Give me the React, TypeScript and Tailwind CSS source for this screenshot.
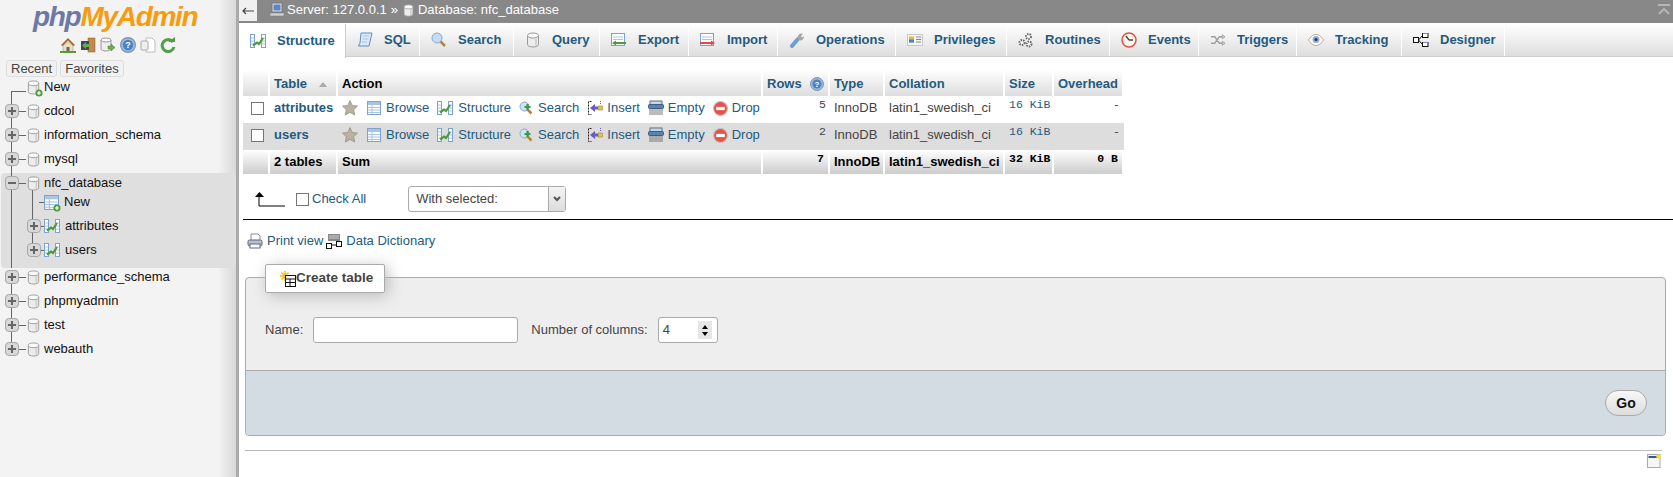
import type { ReactNode } from 'react'

const FONT = "font-['Liberation_Sans',Arial,sans-serif]"

function Cylinder({ size = 16 }: { size?: number }) {
  return (
    <svg width={size} height={size} viewBox="0 0 16 16" className="shrink-0">
      <path d="M2.500 3.500v9c0 1.400 2.500 2.500 5.500 2.500s5.500-1.100 5.500-2.500v-9z" fill="#ececec" stroke="#9a9a9a" />
      <ellipse cx="8" cy="3.500" rx="5.500" ry="2.500" fill="#fafafa" stroke="#9a9a9a" />
      <path d="M11 6.500v7" stroke="#d0d0d0" strokeWidth="2" />
    </svg>
  )
}

function PlusBadge() {
  return (
    <svg width="8" height="8" viewBox="0 0 8 8" className="absolute -right-0.5 -bottom-0.5">
      <circle cx="4" cy="4" r="3.500" fill="#4c9f3c" />
      <path d="M4 2v4M2 4h4" stroke="#fff" strokeWidth="1.200" />
    </svg>
  )
}

function TableIcon({ size = 14 }: { size?: number }) {
  return (
    <svg width={size} height={size} viewBox="0 0 14 14" className="shrink-0">
      <rect x=".5" y=".5" width="13" height="13" fill="#fff" stroke="#7ba3d0" />
      <rect x="1" y="1" width="12" height="3" fill="#a9c4e4" />
      <path d="M1 6.500h12M1 9h12M1 11.500h12M5 4v9" stroke="#a9c4e4" />
    </svg>
  )
}

function StructureIcon() {
  return (
    <svg width="16" height="14" viewBox="0 0 16 14" className="shrink-0">
      <rect x=".5" y=".5" width="4" height="13" fill="#fff" stroke="#7ba3d0" />
      <rect x="11.500" y=".5" width="4" height="13" fill="#fff" stroke="#7ba3d0" />
      <path d="M1 4h3M1 7h3M1 10h3M12 4h3M12 7h3M12 10h3" stroke="#a9c4e4" />
      <path d="M3 11.500 7 8.500l2 1.500 4-6" fill="none" stroke="#4f9a3a" strokeWidth="2.200" />
    </svg>
  )
}

function StarIcon() {
  return (
    <svg width="16" height="16" viewBox="0 0 16 16" className="shrink-0">
      <path d="M8 .5l2.300 5 5.200.6-3.800 3.600 1 5.300L8 12.400 3.300 15l1-5.300L.5 6.100l5.200-.6z" fill="#b9b2a0" stroke="#8f8a7c" strokeWidth=".7" />
    </svg>
  )
}

function MagnifierPlus() {
  return (
    <svg width="14" height="14" viewBox="0 0 14 14" className="shrink-0">
      <path d="M8 8l4.500 4.500" stroke="#b5843c" strokeWidth="2.500" />
      <circle cx="5.500" cy="5.500" r="4.500" fill="#cfe2f6" stroke="#8aa9c9" />
      <path d="M8.500 3v6M5.500 6h6" stroke="#3f9a3a" strokeWidth="2.200" />
    </svg>
  )
}

function InsertIcon() {
  return (
    <svg width="16" height="16" viewBox="0 0 16 16" className="shrink-0">
      <path d="M4.500 1.500h-3v13h3" fill="none" stroke="#222" strokeDasharray="2 1" />
      <path d="M3 8l5-4v2.500h3v3H8V12z" fill="#6a5acd" />
      <rect x="11.500" y="6" width="4" height="4" fill="#f2c230" stroke="#8a7a20" strokeWidth=".5" />
      <path d="M13.500 1v3" stroke="#6a5acd" strokeDasharray="1 1" />
    </svg>
  )
}

function EmptyIcon() {
  return (
    <svg width="16" height="16" viewBox="0 0 16 16" className="shrink-0">
      <rect x="2" y="1" width="12" height="4" fill="#c8d7e8" stroke="#51718f" />
      <rect x="0.500" y="4.500" width="15" height="4" rx="1" fill="#5b84ad" stroke="#3d5d7c" />
      <path d="M2 9v6M4 9v6M6 9v6M8 9v6M10 9v6M12 9v6M14 9v6" stroke="#777" />
    </svg>
  )
}

function DropIcon() {
  return (
    <svg width="15" height="15" viewBox="0 0 14 14" className="shrink-0">
      <circle cx="7" cy="7" r="6.500" fill="#e5534b" stroke="#c9c0bc" />
      <rect x="3" y="5.500" width="8" height="3" fill="#fff" />
    </svg>
  )
}

function HelpIcon({ size = 14 }: { size?: number }) {
  return (
    <svg width={size} height={size} viewBox="0 0 14 14" className="shrink-0">
      <circle cx="7" cy="7" r="6.500" fill="#9bb8dd" stroke="#8096b4" />
      <circle cx="7" cy="7" r="4.500" fill="#4c82c4" />
      <text x="7" y="10" textAnchor="middle" fontSize="8" fontWeight="700" fill="#fff" fontFamily="Liberation Sans">?</text>
    </svg>
  )
}

function DesignerIcon() {
  return (
    <svg width="16" height="16" viewBox="0 0 16 16" fill="#fff" stroke="#111">
      <rect x=".5" y="5.500" width="5" height="5" />
      <rect x="9.500" y="1.500" width="5.500" height="4" />
      <rect x="9.500" y="10.500" width="5.500" height="4" />
      <path d="M5.500 8 9.500 3.500M5.500 8l4 4.500" fill="none" />
      <path d="M10 1h5v1h-5zM10 10h5v1h-5z" fill="#8a7fc0" stroke="none" />
    </svg>
  )
}

function TabIcon({ name }: { name: string }) {
  switch (name) {
    case 'Structure':
      return <StructureIcon />
    case 'SQL':
      return (
        <svg width="16" height="16" viewBox="0 0 16 16">
          <path d="M4 1h11l-3 13H1.500L3 11z" fill="#dbe9f8" stroke="#5d8fc7" />
          <path d="M6 4h6M5.500 7h6M5 10h5" stroke="#a9c4e4" />
        </svg>
      )
    case 'Search':
      return (
        <svg width="16" height="16" viewBox="0 0 16 16">
          <path d="M9 9l5 5" stroke="#b5843c" strokeWidth="2.500" />
          <circle cx="6" cy="6" r="5" fill="#c5dcf4" stroke="#8aa9c9" />
        </svg>
      )
    case 'Query':
      return <Cylinder />
    case 'Export':
      return (
        <svg width="16" height="14" viewBox="0 0 16 14">
          <rect x=".5" y=".5" width="13" height="12" fill="#fff" stroke="#7ba3d0" />
          <path d="M2 4h10M2 6.500h10" stroke="#a9c4e4" />
          <path d="M1 10l4-2.500V9h10v2H5v1.500z" fill="#4f9a3a" />
        </svg>
      )
    case 'Import':
      return (
        <svg width="16" height="14" viewBox="0 0 16 14">
          <rect x=".5" y=".5" width="13" height="12" fill="#fff" stroke="#7ba3d0" />
          <path d="M2 4h10M2 6.500h10" stroke="#a9c4e4" />
          <path d="M0 9h11V7.500l4 2.500-4 2.500V11H0z" fill="#e24a4a" />
        </svg>
      )
    case 'Operations':
      return (
        <svg width="16" height="16" viewBox="0 0 16 16">
          <path d="M3 14l6-7" stroke="#6f9bd6" strokeWidth="4" strokeLinecap="round" />
          <path d="M9 6a3.500 3.500 0 0 1 5-4l-2 2 1 1.500 2-1a3.500 3.500 0 0 1-5 3.500z" fill="#a3a7ad" />
        </svg>
      )
    case 'Privileges':
      return (
        <svg width="16" height="12" viewBox="0 0 16 12">
          <rect x=".5" y=".5" width="15" height="11" fill="#f4f4f4" stroke="#c8c8c8" />
          <rect x="2" y="2.500" width="5" height="6" fill="#e9b44c" />
          <rect x="2" y="5.500" width="5" height="3" fill="#4c82c4" />
          <path d="M9 3h5M9 5.500h5M9 8h5" stroke="#888" />
        </svg>
      )
    case 'Routines':
      return (
        <svg width="16" height="16" viewBox="0 0 16 16" fill="#f6f6f6" stroke="#666">
          <circle cx="10.500" cy="4.500" r="2.500" strokeWidth="2" strokeDasharray="1.500 1" />
          <circle cx="4" cy="10.500" r="2.500" strokeWidth="2" strokeDasharray="1.500 1" />
          <circle cx="11" cy="12" r="2.500" strokeWidth="2" strokeDasharray="1.500 1" />
        </svg>
      )
    case 'Events':
      return (
        <svg width="16" height="16" viewBox="0 0 16 16">
          <circle cx="8" cy="8" r="7" fill="#fbf6e8" stroke="#e2504c" strokeWidth="1.500" />
          <path d="M8 8 5 4M8 8h4" stroke="#444" strokeWidth="1.300" />
        </svg>
      )
    case 'Triggers':
      return (
        <svg width="15" height="12" viewBox="0 0 16 12" fill="none" stroke="#a0a0a0">
          <path d="M0 2.500h4l5 7h3M0 9.500h4l5-7h3" strokeWidth="1.500" />
          <path d="M12 .5l3 2-3 2zM12 7.500l3 2-3 2z" fill="#d8d8d8" />
        </svg>
      )
    case 'Tracking':
      return (
        <svg width="16" height="12" viewBox="0 0 16 12">
          <path d="M.5 6C3 2 5.500.5 8 .5S13 2 15.500 6C13 10 10.500 11.500 8 11.500S3 10 .5 6z" fill="#fff" stroke="#c9a27c" />
          <circle cx="8" cy="5.500" r="3.500" fill="#8eaee0" />
          <circle cx="8" cy="5.500" r="1.500" fill="#334" />
        </svg>
      )
    default:
      return <DesignerIcon />
  }
}

function Toggle({ open = false }: { open?: boolean }) {
  return (
    <span className="relative z-10 w-[14px] h-[14px] rounded-[4px] bg-[#d8d8d8] border border-[#a8a8a8] flex items-center justify-center shrink-0">
      <span className="block w-[8px] h-[2px] bg-[#666]" />
      {!open && <span className="absolute block w-[2px] h-[8px] bg-[#666]" />}
    </span>
  )
}

function DbRow({ name, last, className = 'h-[24px]' }: { name: string; last?: boolean; className?: string }) {
  return (
    <div className={`relative flex items-center pl-[5px] ${className}`}>
      {!last && <span className="absolute left-[11px] top-[12px] w-px h-[24px] bg-[#666]" />}
      <Toggle />
      <span className="w-[7px] h-px bg-[#666]" />
      <Cylinder size={15} />
      <span className="ml-[3px] text-[13px] text-[#111]">{name}</span>
    </div>
  )
}

function SubRow({ name, icon, toggle, className }: { name: string; icon: ReactNode; toggle?: boolean; className: string }) {
  return (
    <div className={`relative flex items-center pl-[27px] ${className}`}>
      {toggle ? <Toggle /> : <span className="ml-[5px] w-[7px]" />}
      <span className={toggle ? 'w-[3px] h-px bg-[#666]' : 'w-[5px] h-px bg-[#666]'} />
      {icon}
      <span className="ml-[5px] text-[13px] text-[#111]">{name}</span>
    </div>
  )
}

function Sidebar() {
  const iconBase = 'w-[16px] h-[16px] shrink-0'
  return (
    <aside className="w-[236px] shrink-0 bg-[linear-gradient(to_right,#f3f3f3_0,#f3f3f3_218px,#d9d9d9_100%)]">
      <div className="h-[33px] pl-[33px] flex items-center italic font-bold text-[28px] leading-none tracking-[-1.3px]">
        <span className="text-[#6c78a8]">php</span>
        <span className="text-[#f89c0e]">MyAdmin</span>
      </div>
      <div className="flex items-center pl-[60px] gap-[4px] h-[24px]">
        <svg viewBox="0 0 16 16" className={iconBase}>
          <path d="M1 8l7-7 7 7-1.500 1L8 3.500 2.500 9z" fill="#a8642c" />
          <path d="M3 9v6h10V9L8 4.500z" fill="#eadfc0" stroke="#888" strokeWidth=".5" />
          <rect x="6.500" y="10" width="3" height="5" fill="#666" />
          <path d="M0 15h16" stroke="#5a9a3a" strokeWidth="2" />
        </svg>
        <svg viewBox="0 0 16 16" className={iconBase}>
          <rect x="8" y="1" width="7" height="14" fill="#c08a4a" stroke="#8a5a2a" strokeWidth=".5" />
          <rect x="1" y="4" width="8" height="9" fill="#445" />
          <path d="M2 8.500 6 5v2h4v3H6v2z" fill="#5ab04a" />
        </svg>
        <svg viewBox="0 0 16 16" className={iconBase}>
          <path d="M1 3v9c0 1 2.500 2 5 2s5-1 5-2V3z" fill="#eee" stroke="#999" />
          <ellipse cx="6" cy="3" rx="5" ry="2" fill="#fafafa" stroke="#999" />
          <path d="M8 9h3V7l4 3.500-4 3.500v-2H8z" fill="#6ab04a" stroke="#3f8030" strokeWidth=".5" />
        </svg>
        <HelpIcon size={16} />
        <svg viewBox="0 0 16 16" className={iconBase}>
          <path d="M6 1h6l3 3v11H6z" fill="#fff" stroke="#bbb" />
          <rect x="1" y="4" width="7" height="9" rx="1" fill="#eee" stroke="#aaa" />
        </svg>
        <svg viewBox="0 0 16 16" className={iconBase}>
          <path d="M13 5a6 6 0 1 0 1 5" fill="none" stroke="#4fa04a" strokeWidth="3" />
          <path d="M8 5h7V0z" fill="#4fa04a" />
        </svg>
      </div>
      <div className="flex gap-[3px] pl-[6px] mt-[3px]">
        <span className="h-[17px] px-[4px] flex items-center rounded-[3px] bg-[#f1f1f1] border border-[#ddd] text-[13px] text-[#444]">Recent</span>
        <span className="h-[17px] px-[4px] flex items-center rounded-[3px] bg-[#f1f1f1] border border-[#ddd] text-[13px] text-[#444]">Favorites</span>
      </div>
      <div className="relative -mt-[2px] h-[24px] flex items-center pl-[11px]">
        <span className="absolute left-[11px] top-[16px] w-px h-[20px] bg-[#666]" />
        <span className="w-[15px] h-px bg-[#666] mt-[8px]" />
        <span className="relative">
          <Cylinder size={15} />
          <PlusBadge />
        </span>
        <span className="ml-[3px] text-[13px] text-[#111]">New</span>
      </div>
      <DbRow name="cdcol" />
      <DbRow name="information_schema" />
      <DbRow name="mysql" />
      <div className="relative mt-[2px] ml-px h-[95px] rounded-[4px] bg-[#dfdfdf]">
        <span className="absolute left-[10px] top-0 bottom-0 w-px bg-[#666]" />
        <span className="absolute left-[31px] top-[14px] w-px h-[64px] bg-[#666]" />
        <div className="-ml-px">
          <div className="relative h-[20px] flex items-center pl-[5px]">
            <Toggle open />
            <span className="w-[7px] h-px bg-[#666]" />
            <Cylinder size={15} />
            <span className="ml-[3px] text-[13px] text-[#111]">nfc_database</span>
          </div>
          <SubRow
            name="New"
            className="h-[18px] mb-[3px]"
            icon={
              <span className="relative">
                <TableIcon size={15} />
                <PlusBadge />
              </span>
            }
          />
          <SubRow name="attributes" toggle className="h-[24px]" icon={<StructureIcon />} />
          <SubRow name="users" toggle className="h-[24px]" icon={<StructureIcon />} />
        </div>
      </div>
      <DbRow name="performance_schema" className="h-[24px] -mt-[3px]" />
      <DbRow name="phpmyadmin" />
      <DbRow name="test" />
      <DbRow name="webauth" last />
    </aside>
  )
}

const TABS = ['Structure', 'SQL', 'Search', 'Query', 'Export', 'Import', 'Operations', 'Privileges', 'Routines', 'Events', 'Triggers', 'Tracking', 'Designer']
const TAB_WIDTHS = ['w-[107px]', 'w-[74px]', 'w-[94px]', 'w-[86px]', 'w-[89px]', 'w-[89px]', 'w-[118px]', 'w-[111px]', 'w-[103px]', 'w-[89px]', 'w-[98px]', 'w-[105px]', 'w-[103px]']

function Tabs() {
  return (
    <nav className="flex h-[33px] mt-px bg-[linear-gradient(#ffffff,#dedede)] border-b border-[#ccc]">
      {TABS.map((tab, i) => (
        <a
          key={tab}
          className={`${TAB_WIDTHS[i]} flex items-center gap-[11px] pl-[11px] text-[13px] font-bold text-[#235a81] border-r border-[#fff] ${
            i === 0 ? 'bg-white h-[34px] border-r-[#ccc]' : ''
          }`}
        >
          <span className="w-[16px] flex justify-center shrink-0">
            <TabIcon name={tab} />
          </span>
          {tab}
        </a>
      ))}
    </nav>
  )
}

const thClass = 'h-[26px] px-[4px] pt-px text-left align-middle text-[13px] font-bold text-[#235a81] border-r-2 border-white bg-[linear-gradient(#ffffff,#dddddd)] whitespace-nowrap'
const tfClass = 'h-[24px] px-[4px] font-bold text-black border-r-2 border-white bg-[linear-gradient(#ffffff,#cccccc)] whitespace-nowrap'
const monoClass = "font-['Liberation_Mono',monospace] text-[11.5px] align-top whitespace-nowrap"

function ActionLink({ icon, label, className = 'gap-[5px]' }: { icon: ReactNode; label: string; className?: string }) {
  return (
    <span className={`inline-flex items-center text-[#235a81] ${className}`}>
      {icon}
      {label}
    </span>
  )
}

function TableRow({ name, rows, stripe }: { name: string; rows: number; stripe?: boolean }) {
  const bg = stripe ? 'bg-[#dddddd]' : 'bg-white'
  return (
    <tr className={`${bg} h-[27px] text-[13px] text-[#444]`}>
      <td className="px-[8px] pb-[3px]">
        <span className="block w-[13px] h-[13px] bg-white border border-[#767676]" />
      </td>
      <td className="px-[4px] pb-[3px] font-bold text-[#235a81]">{name}</td>
      <td className="px-[4px] pb-[3px]">
        <div className="flex items-center gap-[8px] whitespace-nowrap">
          <StarIcon />
          <ActionLink icon={<TableIcon />} label="Browse" className="ml-px gap-[5px]" />
          <ActionLink icon={<StructureIcon />} label="Structure" />
          <ActionLink icon={<MagnifierPlus />} label="Search" />
          <ActionLink icon={<InsertIcon />} label="Insert" className="gap-[4px]" />
          <ActionLink icon={<EmptyIcon />} label="Empty" className="gap-[4px]" />
          <ActionLink icon={<DropIcon />} label="Drop" className="gap-[4px]" />
        </div>
      </td>
      <td className={`px-[4px] text-right ${monoClass}`}>{rows}</td>
      <td className="px-[4px] pb-[3px]">InnoDB</td>
      <td className="px-[4px] pb-[3px]">latin1_swedish_ci</td>
      <td className={`px-[4px] text-[#235a81] ${monoClass}`}>16 KiB</td>
      <td className={`px-[4px] text-right ${monoClass}`}>-</td>
    </tr>
  )
}

function TablesList() {
  return (
    <table className="ml-[4px] mt-[13px] w-[881px] table-fixed border-separate border-spacing-0">
      <colgroup>
        <col className="w-[27px]" />
        <col className="w-[68px]" />
        <col className="w-[425px]" />
        <col className="w-[67px]" />
        <col className="w-[55px]" />
        <col className="w-[120px]" />
        <col className="w-[49px]" />
        <col className="w-[70px]" />
      </colgroup>
      <thead>
        <tr>
          <th className={thClass} />
          <th className={thClass}>
            Table <span className="ml-[8px] inline-block w-0 h-0 border-x-[4px] border-x-transparent border-b-[5px] border-b-[#aaa] align-middle" />
          </th>
          <th className={`${thClass} text-black`}>Action</th>
          <th className={thClass}>
            <span className="flex items-center justify-between">
              Rows <HelpIcon />
            </span>
          </th>
          <th className={thClass}>Type</th>
          <th className={thClass}>Collation</th>
          <th className={thClass}>Size</th>
          <th className={`${thClass} border-r-0`}>Overhead</th>
        </tr>
      </thead>
      <tbody>
        <TableRow name="attributes" rows={5} />
        <TableRow name="users" rows={2} stripe />
      </tbody>
      <tfoot>
        <tr className="text-[13px]">
          <td className={tfClass} />
          <td className={tfClass}>2 tables</td>
          <td className={tfClass}>Sum</td>
          <td className={`${tfClass} text-right ${monoClass}`}>7</td>
          <td className={tfClass}>InnoDB</td>
          <td className={tfClass}>latin1_swedish_ci</td>
          <td className={`${tfClass} ${monoClass}`}>32 KiB</td>
          <td className={`${tfClass} border-r-0 text-right ${monoClass}`}>0 B</td>
        </tr>
      </tfoot>
    </table>
  )
}

export default function App() {
  return (
    <div className={`${FONT} w-[1673px] h-[477px] overflow-hidden flex bg-white`}>
      <Sidebar />
      <div className="w-[3px] shrink-0 bg-[#aaaaaa]" />
      <main className="flex-1 min-w-0">
        <div className="h-[23px] bg-[#888888] flex items-center pb-[3px] text-[13px] text-white">
          <span className="w-[18px] h-[21px] bg-[#f0f0f0] flex items-center justify-center self-start">
            <svg width="12" height="8" viewBox="0 0 12 8" fill="none" stroke="#444" strokeWidth="1.200">
              <path d="M12 4H1M4 1 1 4l3 3" />
            </svg>
          </span>
          <svg width="16" height="16" viewBox="0 0 16 16" className="ml-[12px]">
            <rect x="3" y="1" width="10" height="9" fill="#e2e2e2" stroke="#777" />
            <rect x="4.500" y="2.500" width="7" height="6" fill="#5b84c9" />
            <rect x="1" y="11" width="14" height="3" fill="#d0d0d0" stroke="#777" strokeWidth=".5" />
          </svg>
          <span className="ml-[2px]">Server: 127.0.0.1</span>
          <span className="mx-[4px]">»</span>
          <Cylinder size={13} />
          <span className="ml-[3px]">Database: nfc_database</span>
          <svg width="14" height="12" viewBox="0 0 14 12" className="ml-auto mr-[2px]" fill="none" stroke="#b5b5b5" strokeWidth="2">
            <path d="M1 1h12M2 10l5-5 5 5" />
          </svg>
        </div>
        <Tabs />
        <TablesList />

        <div className="flex items-center h-[26px] mt-[12px] ml-[16px] text-[13px]">
          <svg width="30" height="16" viewBox="0 0 30 16" className="shrink-0">
            <path d="M4 2v13h27" fill="none" stroke="#000" />
            <path d="M0 6l4.500-5L9 6z" fill="#000" />
          </svg>
          <span className="ml-[11px] w-[13px] h-[13px] border border-[#767676] bg-white" />
          <span className="ml-[3px] text-[#235a81]">Check All</span>
          <div className="ml-[42px] w-[158px] h-[26px] rounded-[3px] border border-[#aaa] bg-white flex items-center justify-between text-[#444]">
            <span className="pl-[7px]">With selected:</span>
            <span className="w-[17px] h-[24px] border-l border-[#aaa] bg-[linear-gradient(#f4f4f4,#dcdcdc)] flex items-center justify-center">
              <svg width="8" height="6" viewBox="0 0 8 6" fill="none" stroke="#555" strokeWidth="2">
                <path d="M1 1l3 3 3-3" />
              </svg>
            </span>
          </div>
        </div>
        <hr className="mt-[7px] ml-[4px] border-0 h-px bg-black" />

        <div className="flex items-center h-[20px] mt-[11px] ml-[8px] text-[13px] text-[#235a81]">
          <svg width="16" height="16" viewBox="0 0 16 16">
            <path d="M4 1h7l2 2v5H4z" fill="#fff" stroke="#88a" />
            <rect x="1" y="7" width="14" height="6" rx="1.500" fill="#b7c0cc" stroke="#667" />
            <rect x="3" y="11" width="10" height="4" fill="#fff" stroke="#667" />
          </svg>
          <span className="ml-[4px]">Print view</span>
          <svg width="16" height="16" viewBox="0 0 16 16" className="ml-[3px]">
            <rect x="2" y="1" width="12" height="7" fill="#888" />
            <path d="M3 3h10M3 5h10" stroke="#ccc" />
            <rect x=".5" y="10.500" width="5" height="5" fill="#fff" stroke="#111" />
            <rect x="10.500" y="8.500" width="5" height="5" fill="#fff" stroke="#111" />
            <path d="M5 12h6" stroke="#111" />
          </svg>
          <span className="ml-[4px]">Data Dictionary</span>
        </div>

        <div className="relative mt-[26px] ml-[6px] w-[1421px] rounded-[4px] border border-[#aaa] bg-[#eeeeee]">
          <div className="absolute left-[19px] -top-[14px] w-[120px] h-[29px] bg-white border border-[#aaa] rounded-[2px] shadow-[3px_3px_15px_#bbb] flex items-center pl-[14px] font-bold text-[13.5px] text-[#444]">
            <svg width="16" height="16" viewBox="0 0 16 16" className="shrink-0">
              <path d="M5 0v10M0 5h10M1.500 1.500l7 7M8.500 1.500l-7 7" stroke="#f0c010" strokeWidth="1.500" />
              <rect x="5.500" y="4.500" width="10" height="11" fill="#fff" stroke="#111" />
              <path d="M6 8h9M10 8v7M6 11.500h9" stroke="#111" />
            </svg>
            Create table
          </div>
          <div className="h-[92px] pt-[39px] pl-[19px] flex items-start text-[13px] text-[#444]">
            <span className="h-[26px] flex items-center">Name:</span>
            <span className="ml-[10px] w-[205px] h-[26px] rounded-[3px] border border-[#aaa] bg-white" />
            <span className="ml-[13px] h-[26px] flex items-center">Number of columns:</span>
            <span className="ml-[10px] w-[60px] h-[26px] rounded-[3px] border border-[#aaa] bg-white flex items-center justify-between pl-[4px] pr-[5px]">
              4
              <span className="w-[14px] h-[18px] bg-[#e6e6e6] flex flex-col items-center justify-center gap-[3px]">
                <span className="w-0 h-0 border-x-[3px] border-x-transparent border-b-[4px] border-b-black" />
                <span className="w-0 h-0 border-x-[3px] border-x-transparent border-t-[4px] border-t-black" />
              </span>
            </span>
          </div>
          <div className="h-[65px] border-t border-[#aaa] bg-[#d3dce3] rounded-b-[4px] flex items-center justify-end pr-[18px]">
            <button className="w-[42px] h-[26px] rounded-full border border-[#aaa] bg-[linear-gradient(#f8f8f8,#dddddd)] font-bold text-[14px] text-[#111]">Go</button>
          </div>
        </div>

        <div className="ml-[6px] mr-[11px] mt-[14px] border-t border-[#bbb] flex justify-end pr-[1px] pt-[3px]">
          <svg width="14" height="16" viewBox="0 0 14 16">
            <rect x=".5" y=".5" width="12.500" height="13" fill="#f6f6f6" stroke="#aaa" />
            <rect x="1.500" y="2" width="9" height="2" fill="#2a5aa0" />
            <circle cx="11.500" cy="2.500" r="2.200" fill="#f6e23c" />
          </svg>
        </div>
      </main>
    </div>
  )
}
